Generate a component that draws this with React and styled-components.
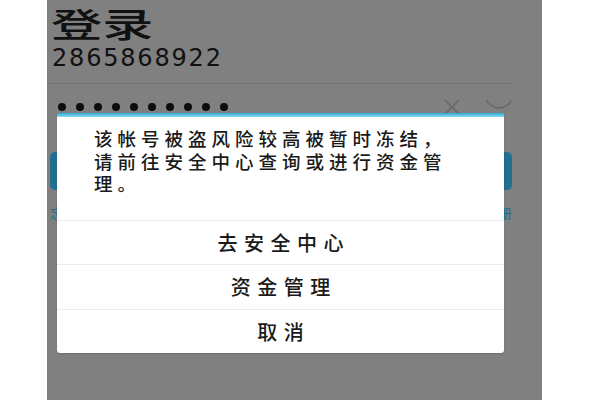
import React from "react";
import styled, { createGlobalStyle } from "styled-components";

const Global = createGlobalStyle`
  html, body { margin: 0; padding: 0; background: #ffffff; }
  body { font-family: "Noto Sans CJK SC", "Noto Sans", sans-serif; }
`;

const Page = styled.div`
  width: 600px;
  height: 400px;
  display: flex;
  background: #ffffff;
  overflow: hidden;
`;

const Side = styled.div`
  width: ${(p) => p.$w}px;
  flex: none;
`;

const Phone = styled.div`
  position: relative;
  width: 495px;
  height: 400px;
  flex: none;
  background: #808080;
  overflow: hidden;
  display: flex;
  flex-direction: column;
`;

const Title = styled.div`
  margin: 4px 0 0 4px;
  height: 38px;
  line-height: 38px;
  font-size: 33px;
  font-weight: 500;
  color: #111;
  transform: scaleX(1.55);
  transform-origin: left center;
  white-space: nowrap;
`;

const Account = styled.div`
  margin: 2px 0 0 5px;
  height: 28px;
  line-height: 28px;
  font-family: "DejaVu Sans", sans-serif;
  font-size: 24px;
  letter-spacing: 1.8px;
  color: #111;
`;

const Divider = styled.div`
  margin: 11px 30px 0 0;
  height: 1px;
  background: #727272;
`;

const PwdRow = styled.div`
  margin: 12px 30px 0 11px;
  height: 22px;
  display: flex;
  align-items: center;
`;

const Dots = styled.div`
  display: flex;
  gap: 10px;
  flex: 1;
`;

const Dot = styled.span`
  width: 8px;
  height: 8px;
  border-radius: 50%;
  background: #0d0d0d;
`;

const IconBox = styled.div`
  width: ${(p) => p.$w}px;
  height: 22px;
  display: flex;
  align-items: center;
  justify-content: center;
  margin-left: ${(p) => p.$ml || 0}px;
`;

const LoginBtn = styled.div`
  margin: 34px 30px 0 3px;
  height: 38px;
  border-radius: 5px;
  background: #216f91;
`;

const Links = styled.div`
  margin: 14px 30px 0 3px;
  height: 18px;
  display: flex;
  justify-content: space-between;
  font-size: 13px;
  line-height: 18px;
  color: #216f91;
`;

const Dialog = styled.div`
  position: absolute;
  left: 10px;
  top: 113px;
  width: 447px;
  background: #ffffff;
  border-radius: 0 0 3px 3px;
  box-shadow: 0 1px 2px rgba(0, 0, 0, 0.15);
  display: flex;
  flex-direction: column;
`;

const TopBar = styled.div`
  height: 4px;
  background: linear-gradient(to bottom, #27a6d3, #8fdcf2);
`;

const Message = styled.div`
  padding: 10px 40px 25px 37px;
  font-size: 18.5px;
  font-weight: 500;
  line-height: 22.5px;
  letter-spacing: 5px;
  color: #1a1a1a;
`;

const Action = styled.div`
  height: ${(p) => p.$h}px;
  border-top: 1px solid #ececec;
  display: flex;
  align-items: center;
  justify-content: center;
  font-size: 20px;
  font-weight: 500;
  letter-spacing: 6.5px;
  padding-left: 6.5px;
  color: #1a1a1a;
`;

const CloseIcon = () => (
  <svg width="20" height="16" viewBox="0 0 20 16">
    <path d="M3 1 L17 15 M17 1 L3 15" stroke="#686868" strokeWidth="1.6" fill="none" />
  </svg>
);

const EyeIcon = () => (
  <svg width="26" height="16" viewBox="0 0 26 16">
    <path d="M2 4 Q13 14 24 4" stroke="#686868" strokeWidth="1.6" fill="none" />
    <path d="M2 4 L1 1 M24 4 L25 1" stroke="#686868" strokeWidth="1.4" fill="none" />
  </svg>
);

export default function App() {
  return (
    <>
      <Global />
      <Page>
        <Side $w={47} />
        <Phone>
          <Title>登录</Title>
          <Account>2865868922</Account>
          <Divider />
          <PwdRow>
            <Dots>
              {Array.from({ length: 10 }).map((_, i) => (
                <Dot key={i} />
              ))}
            </Dots>
            <IconBox $w={20}>
              <CloseIcon />
            </IconBox>
            <IconBox $w={26} $ml={24}>
              <EyeIcon />
            </IconBox>
          </PwdRow>
          <LoginBtn />
          <Links>
            <span>忘记密码</span>
            <span>新用户注册</span>
          </Links>
          <Dialog>
            <TopBar />
            <Message>该帐号被盗风险较高被暂时冻结，请前往安全中心查询或进行资金管理。</Message>
            <Action $h={43}>去安全中心</Action>
            <Action $h={44}>资金管理</Action>
            <Action $h={43}>取消</Action>
          </Dialog>
        </Phone>
        <Side $w={58} />
      </Page>
    </>
  );
}
